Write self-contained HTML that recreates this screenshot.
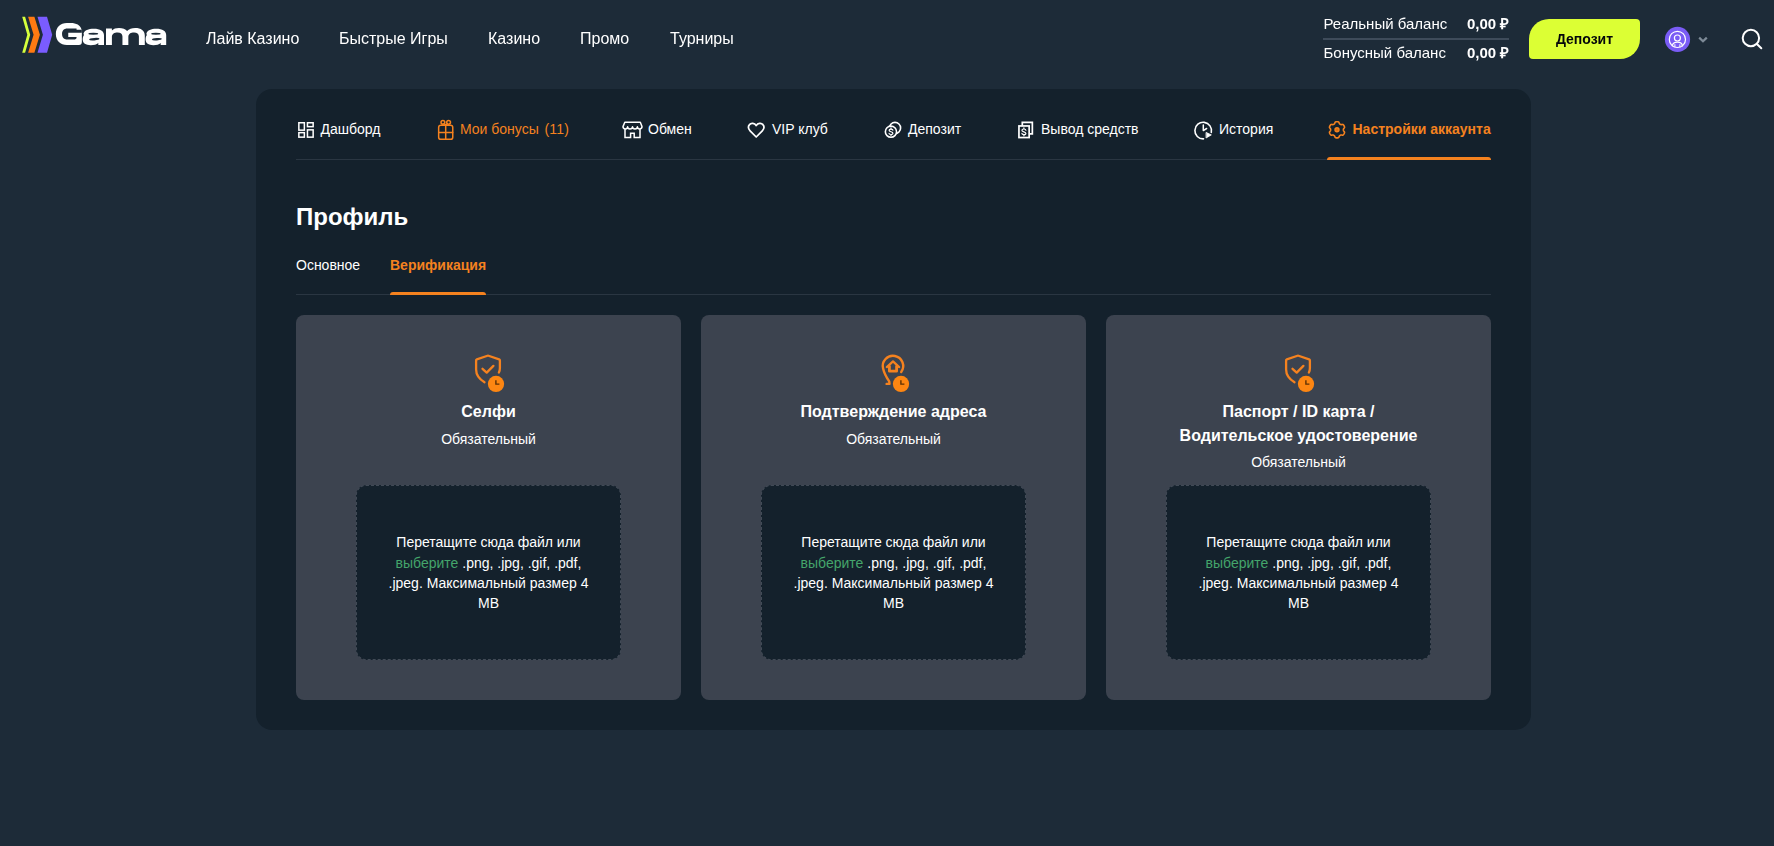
<!DOCTYPE html>
<html lang="ru">
<head>
<meta charset="utf-8">
<title>Gama</title>
<style>
*{box-sizing:border-box;margin:0;padding:0}
html,body{width:1774px;height:846px;overflow:hidden}
body{background:#1d2b38;font-family:"Liberation Sans",sans-serif;color:#fff;position:relative}
.t{position:absolute;white-space:nowrap;color:#fff}
.b{font-weight:700}
.o{color:#f5821f}
svg{position:absolute;overflow:visible;z-index:5;pointer-events:none}
/* header */
.nav{font-size:16px;line-height:20px;top:28.5px}
.bal{font-size:15px;line-height:18px}
#dep{position:absolute;left:1529px;top:19px;width:111px;height:40px;background:#dcff34;border-radius:20px 4px 20px 4px;color:#04070a;font-size:14px;font-weight:700;line-height:40px;text-align:center}
#ava{position:absolute;left:1665px;top:27px;width:25px;height:25px;border-radius:50%;background:#7a5cf0}
#hdr{position:absolute;left:0;top:0;width:1774px;height:78px;will-change:transform}
/* panel */
#panel{position:absolute;left:256px;top:89px;width:1275px;height:641px;border-radius:16px;background:#14212c}
.tab{font-size:14px;line-height:18px;top:120px}
.hr{position:absolute;height:1px;background:#2a3642}
.ul{position:absolute;height:3px;background:#f5821f;border-radius:3px 3px 0 0}
.card{position:absolute;top:315px;width:385px;height:385px;border-radius:8px;background:#3c434f}
.dz{position:absolute;left:60px;top:170px;width:265px;height:174.5px;border-radius:10px;background:#14212c;border:1px dashed #414a56;font-size:14px;line-height:20.3px;text-align:center;padding-top:46.4px;color:#fff}
.dz span{color:#44a56b}
.ct{position:absolute;left:0;width:385px;text-align:center;font-size:16px;font-weight:700;line-height:24px}
.cs{position:absolute;left:0;width:385px;text-align:center;font-size:14px;line-height:18px}
</style>
</head>
<body>

<!-- HEADER -->
<svg id="ov" width="1774" height="846" viewBox="0 0 1774 846" style="left:0;top:0" fill="none" stroke-linecap="round" stroke-linejoin="round">
<!-- logo -->
<g stroke="none">
<path d="M22.2 16.8 H25.1 L30.2 34.8 L25.1 52.8 H22.2 L27.3 34.8 Z" fill="#d6ff3c"/>
<path d="M28.1 16.8 H34.4 L39.9 34.8 L34.4 52.8 H28.1 L33.6 34.8 Z" fill="#ff7a12"/>
<path d="M37.5 16.8 H47 L52.2 34.8 L47 52.8 H37.5 L42.9 34.8 Z" fill="#7a5cff"/>
<g fill="#fff">
<path transform="translate(55.85 22.9)" fill-rule="evenodd" d="M11 0 H15 C20.5 0 24.3 2.2 25.6 6.3 L25.75 6.9 H26 V19 C26 21 25 22 23 22 H11 C4.5 22 0 17.8 0 11 C0 4.2 4.5 0 11 0 Z M11.4 5.6 H20.7 V6.9 H26.2 V9.95 H12.4 V14.1 H20.7 V14.8 C20.7 16 19.6 16.6 18 16.6 H11.4 C8.1 16.6 6.2 14.4 6.2 11.1 C6.2 7.8 8.1 5.6 11.4 5.6 Z"/>
<path transform="translate(82.7 28.7)" d="M21.3 16.2 V6.6 C21.3 2.2 17.5 0 11 0 C5.5 0 2 1.6 0.9 4.6 C0.7 5.2 0.9 5.7 1.3 6.3 C0.4 7.6 0 9.1 0 10.8 C0 14.4 3 16.5 8 16.5 C11.4 16.5 13.9 15.8 15.6 14.3 V16.2 Z"/>
<path transform="translate(145.6 28.7) scale(0.967 1)" d="M21.3 16.2 V6.6 C21.3 2.2 17.5 0 11 0 C5.5 0 2 1.6 0.9 4.6 C0.7 5.2 0.9 5.7 1.3 6.3 C0.4 7.6 0 9.1 0 10.8 C0 14.4 3 16.5 8 16.5 C11.4 16.5 13.9 15.8 15.6 14.3 V16.2 Z"/>
</g>
<g fill="#1d2b38">
<ellipse cx="94.3" cy="39.2" rx="5.2" ry="1.25" transform="rotate(-4 94.3 39.2)"/>
<ellipse cx="93.3" cy="33.75" rx="4.9" ry="0.9"/>
<ellipse cx="156.9" cy="39.2" rx="5" ry="1.25" transform="rotate(-4 156.9 39.2)"/>
<ellipse cx="155.9" cy="33.75" rx="4.7" ry="0.9"/>
</g>
<path fill="#fff" d="M106 45 V28.5 H111.9 V30.6 C113.4 28.8 116 28 119 28 C122.6 28 125.6 29 127.1 31.1 C128.9 29 131.8 28 135.2 28 C141 28 144.8 30.6 144.8 35.6 V45 H138.9 V36.6 C138.9 33.9 137 32.6 134 32.6 C130.8 32.6 128.35 34 128.35 37 V45 H122.45 V36.6 C122.45 33.9 120.6 32.6 117.6 32.6 C114.4 32.6 111.9 34 111.9 37 V45 Z"/>
</g>
<!-- avatar -->
<circle cx="1677.5" cy="39.4" r="12.6" fill="#7a5cf5" stroke="none"/>
<g stroke="#fff" stroke-width="1.2">
<circle cx="1677.4" cy="39.4" r="8.1"/>
<circle cx="1677.4" cy="38" r="3"/>
<path d="M1672.3 45.8 C1672.7 43.5 1674.8 42.1 1677.4 42.1 C1680 42.1 1682.1 43.5 1682.5 45.8"/><path d="M1674.9 44.6 V46.6 M1679.9 44.6 V46.6" stroke-width="1"/>
</g>
<path d="M1699.2 37.6 L1703 41.3 L1706.8 37.6" stroke="#7d8a97" stroke-width="2.2" stroke-linecap="butt" stroke-linejoin="miter"/>
<!-- search -->
<g stroke="#fff" stroke-width="2">
<circle cx="1750.9" cy="38" r="8.2"/>
<path d="M1756.9 44 L1761.3 48.3"/>
</g>
<!-- dashboard -->
<g stroke="#fff" stroke-width="1.5" stroke-linejoin="miter">
<rect x="298.85" y="122.75" width="5.5" height="7.4"/>
<rect x="307.45" y="122.75" width="5.7" height="3.9"/>
<rect x="298.85" y="132.65" width="5.5" height="4.5"/>
<rect x="307.45" y="129.85" width="5.7" height="7.3"/>
</g>
<!-- gift -->
<g stroke="#f5821f" stroke-width="1.5">
<rect x="438.65" y="125.35" width="14.1" height="14" rx="2.2"/>
<path d="M445.7 125.4 V139.3 M438.7 132.4 H452.7"/>
<circle cx="442.9" cy="122.3" r="1.9"/>
<circle cx="448.6" cy="122.3" r="1.9"/>
<path d="M444.2 123.8 L445.7 125.2 L447.3 123.8"/>
</g>
<!-- store -->
<g stroke="#fff" stroke-width="1.5" stroke-linejoin="miter">
<path d="M625 129.6 V137.5 H630.6 V133.2 H634.2 V137.5 H640 V129.6"/>
<path d="M624.8 122.2 H640.3 L642 126.6 Q642 129 639.6 129 Q637.4 129 637.4 126.8 Q637.4 129 635 129 Q632.5 129 632.5 126.8 Q632.5 129 630 129 Q627.6 129 627.6 126.8 Q627.6 129 625.4 129 Q623 129 623 126.6 Z" stroke-linejoin="round"/>
</g>
<!-- heart -->
<path d="M756.2 125.7 C754.6 122.9 751 122.7 749.5 124.6 C748 126.4 748.4 129 750.1 130.8 L756.2 137 L762.3 130.8 C764 129 764.4 126.4 762.9 124.6 C761.4 122.7 757.8 122.9 756.2 125.7 Z" stroke="#fff" stroke-width="1.7"/>
<!-- coins -->
<g stroke="#fff" stroke-width="1.6">
<circle cx="895" cy="128" r="5.6"/>
<circle cx="890.95" cy="131.7" r="5.6" fill="#14212c"/>
<path d="M892.9 130.2 C892.7 128.7 889.2 128.6 889.1 130.3 C889 132.1 892.9 131.4 892.9 133.2 C892.9 135 889.1 134.8 889 133.3 M891 127.9 V128.9 M891 134.6 V135.6" stroke-width="1.2"/>
</g>
<!-- docs -->
<g stroke="#fff" stroke-width="1.7" stroke-linejoin="miter">
<path d="M1022.3 125.5 V122.45 H1032.35 V133.85 H1029.6"/>
<rect x="1018.95" y="125.95" width="10.2" height="11.6"/>
<path d="M1025.9 130.2 C1025.7 128.6 1022 128.5 1021.9 130.3 C1021.8 132.2 1025.9 131.5 1025.9 133.4 C1025.9 135.2 1022 135 1021.9 133.4 M1023.9 127.8 V128.8 M1023.9 134.8 V135.8" stroke-width="1.2" stroke-linejoin="round"/>
</g>
<!-- history -->
<g stroke="#fff" stroke-width="1.6">
<path d="M1203.5 138.9 A8.3 8.3 0 1 1 1211.3 132.4"/>
<path d="M1203.3 124.9 V130.6 L1206.6 128.5" stroke-width="1.5"/>
<path d="M1206.4 132.6 L1211.3 134.9 L1206.4 137.8 Z" fill="#fff" stroke-width="0.8"/>
</g>
<!-- gear -->
<g stroke="#f5821f" stroke-width="1.6">
<path d="M1343.39 129.80 L1343.39 130.02 L1343.40 130.25 L1343.44 130.48 L1343.52 130.72 L1343.68 130.98 L1343.94 131.27 L1344.23 131.60 L1344.45 131.94 L1344.54 132.25 L1344.53 132.54 L1344.47 132.82 L1344.38 133.08 L1344.26 133.34 L1344.14 133.60 L1344.00 133.84 L1343.86 134.09 L1343.70 134.32 L1343.53 134.55 L1343.35 134.76 L1343.14 134.95 L1342.89 135.10 L1342.57 135.18 L1342.18 135.16 L1341.75 135.07 L1341.36 135.00 L1341.05 134.99 L1340.81 135.04 L1340.59 135.12 L1340.39 135.22 L1340.19 135.33 L1340.00 135.44 L1339.81 135.57 L1339.63 135.71 L1339.47 135.90 L1339.32 136.17 L1339.19 136.55 L1339.05 136.97 L1338.87 137.32 L1338.65 137.55 L1338.39 137.69 L1338.12 137.78 L1337.84 137.83 L1337.56 137.86 L1337.28 137.88 L1337.00 137.89 L1336.72 137.88 L1336.44 137.86 L1336.16 137.83 L1335.88 137.78 L1335.61 137.69 L1335.35 137.55 L1335.13 137.32 L1334.95 136.97 L1334.81 136.55 L1334.68 136.17 L1334.53 135.90 L1334.37 135.71 L1334.19 135.57 L1334.00 135.44 L1333.81 135.33 L1333.61 135.22 L1333.41 135.12 L1333.19 135.04 L1332.95 134.99 L1332.64 135.00 L1332.25 135.07 L1331.82 135.16 L1331.43 135.18 L1331.11 135.10 L1330.86 134.95 L1330.65 134.76 L1330.47 134.55 L1330.30 134.32 L1330.14 134.09 L1330.00 133.84 L1329.86 133.60 L1329.74 133.34 L1329.62 133.08 L1329.53 132.82 L1329.47 132.54 L1329.46 132.25 L1329.55 131.94 L1329.77 131.60 L1330.06 131.27 L1330.32 130.98 L1330.48 130.72 L1330.56 130.48 L1330.60 130.25 L1330.61 130.02 L1330.61 129.80 L1330.61 129.58 L1330.60 129.35 L1330.56 129.12 L1330.48 128.88 L1330.32 128.62 L1330.06 128.33 L1329.77 128.00 L1329.55 127.66 L1329.46 127.35 L1329.47 127.06 L1329.53 126.78 L1329.62 126.52 L1329.74 126.26 L1329.86 126.00 L1330.00 125.76 L1330.14 125.51 L1330.30 125.28 L1330.47 125.05 L1330.65 124.84 L1330.86 124.65 L1331.11 124.50 L1331.43 124.42 L1331.82 124.44 L1332.25 124.53 L1332.64 124.60 L1332.95 124.61 L1333.19 124.56 L1333.41 124.48 L1333.61 124.38 L1333.81 124.27 L1334.00 124.16 L1334.19 124.03 L1334.37 123.89 L1334.53 123.70 L1334.68 123.43 L1334.81 123.05 L1334.95 122.63 L1335.13 122.28 L1335.35 122.05 L1335.61 121.91 L1335.88 121.82 L1336.16 121.77 L1336.44 121.74 L1336.72 121.72 L1337.00 121.71 L1337.28 121.72 L1337.56 121.74 L1337.84 121.77 L1338.12 121.82 L1338.39 121.91 L1338.65 122.05 L1338.87 122.28 L1339.05 122.63 L1339.19 123.05 L1339.32 123.43 L1339.47 123.70 L1339.63 123.89 L1339.81 124.03 L1340.00 124.16 L1340.19 124.27 L1340.39 124.38 L1340.59 124.48 L1340.81 124.56 L1341.05 124.61 L1341.36 124.60 L1341.75 124.53 L1342.18 124.44 L1342.57 124.42 L1342.89 124.50 L1343.14 124.65 L1343.35 124.84 L1343.53 125.05 L1343.70 125.28 L1343.86 125.51 L1344.00 125.76 L1344.14 126.00 L1344.26 126.26 L1344.38 126.52 L1344.47 126.78 L1344.53 127.06 L1344.54 127.35 L1344.45 127.66 L1344.23 128.00 L1343.94 128.33 L1343.68 128.62 L1343.52 128.88 L1343.44 129.12 L1343.40 129.35 L1343.39 129.58Z"/>
<circle cx="1337" cy="129.8" r="2" stroke-width="1.4" fill="#e07110"/>
</g>
<g stroke="#f5821f" stroke-width="2.3">
<path d="M484.5 382.2 C479.4 379.2 476.1 375 476.1 369.5 V360.4 Q476 359.6 476.8 359.3 L487.5 355.75 Q488 355.6 488.5 355.75 L499.1 359.3 Q499.9 359.6 499.9 360.4 V368 C499.9 369.6 499.6 371.1 498.9 372.5"/>
<path d="M482.5 368.8 L486.7 372.6 L493.4 365.9"/>
<circle cx="496" cy="383.9" r="8.15" fill="#fd8612" stroke="none"/>
<path d="M495.9 380.3 V384.1 H499.4" stroke="#5e3104" stroke-width="1.4" stroke-linecap="butt" stroke-linejoin="miter"/>
</g>
<g transform="translate(810 0)" stroke="#f5821f" stroke-width="2.3">
<path d="M484.5 382.2 C479.4 379.2 476.1 375 476.1 369.5 V360.4 Q476 359.6 476.8 359.3 L487.5 355.75 Q488 355.6 488.5 355.75 L499.1 359.3 Q499.9 359.6 499.9 360.4 V368 C499.9 369.6 499.6 371.1 498.9 372.5"/>
<path d="M482.5 368.8 L486.7 372.6 L493.4 365.9"/>
<circle cx="496" cy="383.9" r="8.15" fill="#fd8612" stroke="none"/>
<path d="M495.9 380.3 V384.1 H499.4" stroke="#5e3104" stroke-width="1.4" stroke-linecap="butt" stroke-linejoin="miter"/>
</g>
<!-- pin -->
<g stroke="#f5821f" stroke-width="2">
<path d="M901.2 372 A10.2 10.2 0 1 0 883.1 368.5 C884.1 373 886.6 377.6 889.2 381.4 L889.5 383.9 H886.6" stroke-width="2.4"/>
<path d="M886.8 367.1 L893 361.4 L899.2 367.1" stroke-width="2.2"/>
<path d="M889.4 366.3 V371.2 H896.6 V366.3" stroke-width="2.8"/>
<circle cx="901" cy="383.9" r="8.15" fill="#fd8612" stroke="none"/>
<path d="M900.9 380.3 V384.1 H904.4" stroke="#5e3104" stroke-width="1.4" stroke-linecap="butt" stroke-linejoin="miter"/>
</g>
</svg>
<div id="hdr">
<div class="t nav" style="left:206px">Лайв Казино</div>
<div class="t nav" style="left:339px">Быстрые Игры</div>
<div class="t nav" style="left:488px">Казино</div>
<div class="t nav" style="left:580px">Промо</div>
<div class="t nav" style="left:670px">Турниры</div>

<div class="t bal" style="left:1323.5px;top:14.5px">Реальный баланс</div>
<div class="t bal b" style="left:1467px;top:14.5px">0,00 ₽</div>
<div class="hr" style="left:1323px;top:38px;width:186px;height:2px;background:#3e4b5a"></div>
<div class="t bal" style="left:1323.5px;top:43.5px">Бонусный баланс</div>
<div class="t bal b" style="left:1467px;top:43.5px">0,00 ₽</div>
<div id="dep">Депозит</div>

</div>

<!-- PANEL -->
<div id="panel"></div>
<div class="t tab" style="left:320.5px">Дашборд</div>
<div class="t tab o" style="left:460px">Мои бонусы</div><div class="t tab o" style="left:544.5px;letter-spacing:0.2px">(11)</div>
<div class="t tab" style="left:648px">Обмен</div>
<div class="t tab" style="left:772px">VIP клуб</div>
<div class="t tab" style="left:908px">Депозит</div>
<div class="t tab" style="left:1041px">Вывод средств</div>
<div class="t tab" style="left:1219px">История</div>
<div class="t tab b o" style="left:1352.5px">Настройки аккаунта</div>
<div class="hr" style="left:296px;top:159px;width:1195px"></div>
<div class="ul" style="left:1327px;top:157px;width:164px"></div>

<div class="t b" style="left:296px;top:202.5px;font-size:24px;line-height:28px">Профиль</div>
<div class="t" style="left:296px;top:256px;font-size:14px;line-height:18px">Основное</div>
<div class="t b o" style="left:390px;top:256px;font-size:14px;line-height:18px">Верификация</div>
<div class="hr" style="left:296px;top:294px;width:1195px"></div>
<div class="ul" style="left:390px;top:292px;width:96px"></div>

<!-- CARDS -->
<div class="card" style="left:296px">
  <div class="ct" style="top:84.5px">Селфи</div>
  <div class="cs" style="top:114.5px">Обязательный</div>
  <div class="dz">Перетащите сюда файл или<br><span>выберите</span> .png, .jpg, .gif, .pdf,<br>.jpeg. Максимальный размер 4<br>MB</div>
</div>
<div class="card" style="left:701px">
  <div class="ct" style="top:84.5px">Подтверждение адреса</div>
  <div class="cs" style="top:114.5px">Обязательный</div>
  <div class="dz">Перетащите сюда файл или<br><span>выберите</span> .png, .jpg, .gif, .pdf,<br>.jpeg. Максимальный размер 4<br>MB</div>
</div>
<div class="card" style="left:1106px">
  <div class="ct" style="top:84.5px">Паспорт / ID карта /<br>Водительское удостоверение</div>
  <div class="cs" style="top:137.5px">Обязательный</div>
  <div class="dz">Перетащите сюда файл или<br><span>выберите</span> .png, .jpg, .gif, .pdf,<br>.jpeg. Максимальный размер 4<br>MB</div>
</div>

</body>
</html>
